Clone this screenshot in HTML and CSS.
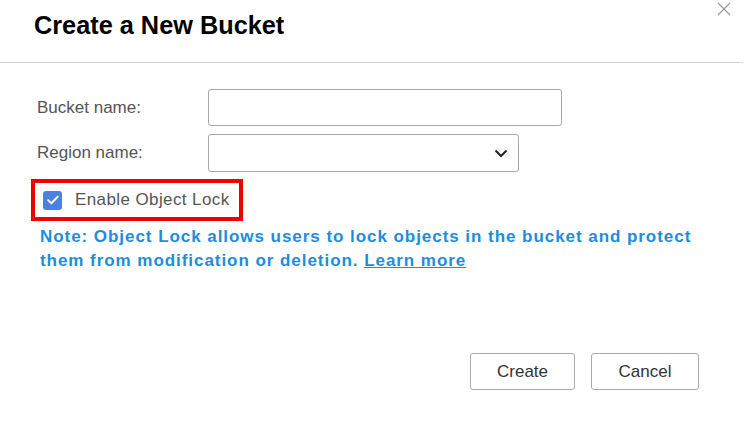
FILE: index.html
```html
<!DOCTYPE html>
<html lang="en">
<head>
<meta charset="utf-8">
<title>Create a New Bucket</title>
<link rel="stylesheet" href="styles.css">
</head>
<body>
<div class="dialog">
  <header class="dialog-header">
    <h1 class="dialog-title">Create a New Bucket</h1>
    <button class="close-btn" aria-label="Close">
      <svg width="14" height="14" viewBox="0 0 14 14"><path d="M1 1L13 13M13 1L1 13" stroke="#9a9a9a" stroke-width="1.2" fill="none"/></svg>
    </button>
  </header>
  <div class="dialog-body">
    <div class="form-row">
      <label class="form-label">Bucket name:</label>
      <input class="text-input" type="text">
    </div>
    <div class="form-row row-region">
      <label class="form-label">Region name:</label>
      <div class="select-box">
        <svg class="chevron" width="14" height="9" viewBox="0 0 14 9"><path d="M1.5 1.5L7 7L12.5 1.5" stroke="#222" stroke-width="2" fill="none"/></svg>
      </div>
    </div>
    <div class="lock-highlight">
      <span class="checkbox">
        <svg width="12" height="10" viewBox="0 0 12 10"><path d="M1.2 5.2L4.4 8.2L10.8 1.6" stroke="#fff" stroke-width="2" fill="none" stroke-linecap="round" stroke-linejoin="round"/></svg>
      </span>
      <span class="lock-label">Enable Object Lock</span>
    </div>
    <p class="note">Note: Object Lock allows users to lock objects in the bucket and protect them from modification or deletion. <a class="learn-more" href="#">Learn more</a></p>
  </div>
  <footer class="dialog-footer">
    <button class="btn">Create</button>
    <button class="btn btn-cancel">Cancel</button>
  </footer>
</div>
</body>
</html>
```
FILE: styles.css
```css
* { box-sizing: border-box; }
html, body { margin: 0; padding: 0; background: #fff; }
body {
  font-family: "Liberation Sans", Arial, sans-serif;
  width: 745px;
  height: 421px;
  overflow: hidden;
}
.dialog {
  width: 745px;
  height: 421px;
  display: flex;
  flex-direction: column;
}
.dialog-header {
  position: relative;
  height: 63px;
  width: 743px;
  border-bottom: 1px solid #d2d2d2;
  display: flex;
  align-items: flex-start;
  padding-left: 34px;
}
.dialog-title {
  margin: 0;
  margin-top: 11px;
  font-size: 25.3px;
  font-weight: bold;
  color: #000;
  line-height: 28px;
}
.close-btn {
  position: absolute;
  top: 2px;
  right: 12px;
  width: 14px;
  height: 14px;
  padding: 0;
  border: none;
  background: none;
  display: flex;
}
.dialog-body {
  padding-top: 26px;
  display: flex;
  flex-direction: column;
}
.form-row {
  display: flex;
  align-items: center;
  padding-left: 37px;
}
.row-region { margin-top: 8px; }
.form-label {
  width: 171px;
  font-size: 17px;
  color: #555;
}
.text-input {
  width: 354px;
  height: 37px;
  border: 1px solid #a9a9a9;
  border-radius: 3px;
  margin: 0;
  padding: 0 8px;
  font: inherit;
}
.select-box {
  width: 311px;
  height: 38px;
  border: 1px solid #a9a9a9;
  border-radius: 3px;
  display: flex;
  align-items: center;
  justify-content: flex-end;
  padding-right: 10px;
}
.lock-highlight {
  margin-top: 7px;
  margin-left: 31px;
  width: 212px;
  height: 42px;
  border: 4px solid #f00000;
  display: flex;
  align-items: center;
  padding-left: 8px;
}
.checkbox {
  width: 19px;
  height: 19px;
  border-radius: 3px;
  background: #4c7fe3;
  display: flex;
  align-items: center;
  justify-content: center;
}
.lock-label {
  margin-left: 13px;
  font-size: 17px;
  letter-spacing: 0.4px;
  color: #555;
}
.note {
  margin: 4px 0 0 0;
  padding-left: 40px;
  width: 720px;
  font-family: "Liberation Sans", Arial, sans-serif;
  font-size: 17px;
  letter-spacing: 0.95px;
  font-weight: bold;
  line-height: 24px;
  color: #1c8de0;
}
.learn-more {
  color: #1c8de0;
  text-decoration: underline;
}
.dialog-footer {
  margin-top: auto;
  margin-bottom: 31px;
  display: flex;
  justify-content: flex-end;
  gap: 16px;
  padding-right: 46px;
}
.btn {
  width: 105px;
  height: 37px;
  border: 1px solid #aaa;
  border-radius: 3px;
  background: #fff;
  font-family: "Liberation Sans", Arial, sans-serif;
  font-size: 17px;
  color: #333;
  padding: 0;
}
.btn-cancel { width: 108px; }
```
